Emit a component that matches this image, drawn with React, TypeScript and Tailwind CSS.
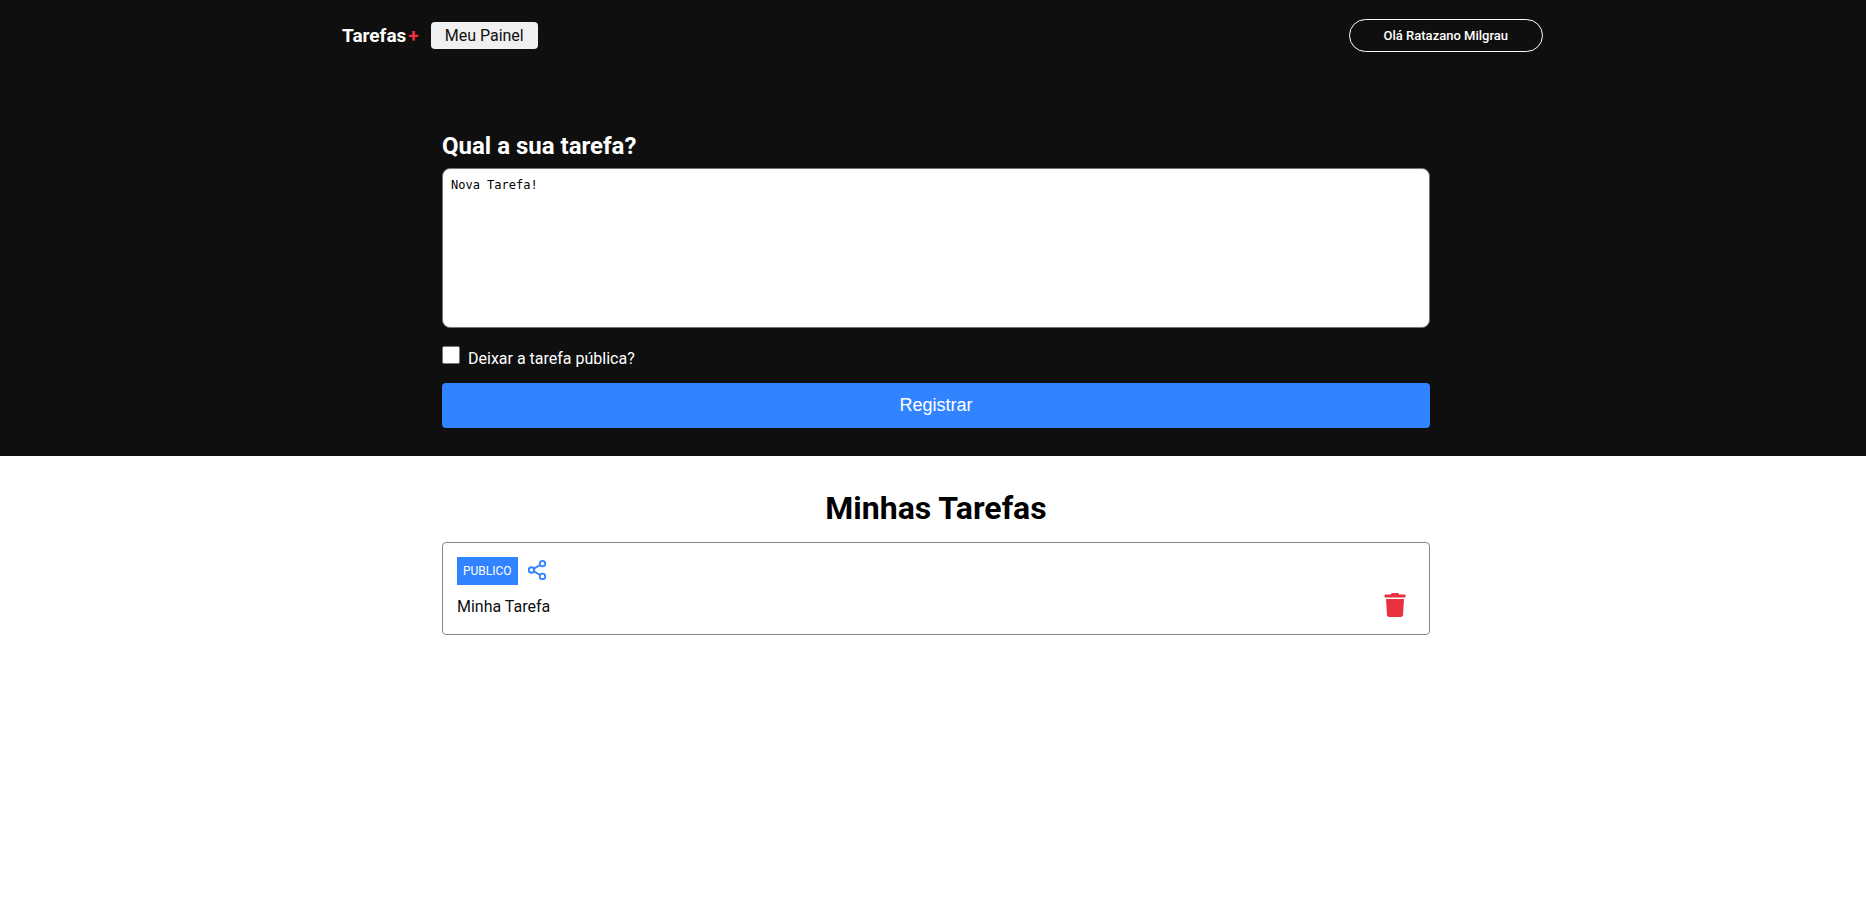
import { useState } from 'react';
import { FiShare2 } from 'react-icons/fi';
import { FaTrash } from 'react-icons/fa';

function Header() {
  return (
    <header className="flex w-full justify-center pt-[19px] pl-[19px]">
      <section className="flex w-full max-w-[1201px] items-center justify-between">
        <nav className="flex items-center gap-3">
          <a href="#inicio" className="flex gap-0.5 text-[19px] leading-7 font-bold text-white">
            Tarefas<span className="text-[#ea3140]">+</span>
          </a>
          <a
            href="#painel"
            className="rounded bg-[#f0f0f0] px-3.5 text-base leading-[27px] text-[#0f0f0f]"
          >
            Meu Painel
          </a>
        </nav>
        <button
          type="button"
          className="h-[33px] cursor-pointer rounded-full border border-white px-[34px] text-[13px] leading-4 font-medium text-white"
        >
          Olá Ratazano Milgrau
        </button>
      </section>
    </header>
  );
}

function TaskForm() {
  const [text, setText] = useState('Nova Tarefa!');
  const [isPublic, setIsPublic] = useState(false);

  return (
    <section className="flex w-full justify-center pt-20 pb-7 pl-1.5">
      <form className="w-full max-w-[988px]" onSubmit={(e) => e.preventDefault()}>
        <h1 className="mb-2 text-2xl leading-7 font-bold text-white">
          <label htmlFor="tarefa">Qual a sua tarefa?</label>
        </h1>
        <textarea
          id="tarefa"
          value={text}
          onChange={(e) => setText(e.target.value)}
          className="block h-40 w-full resize-none rounded-lg border border-[#767676] bg-white p-2 font-['DejaVu_Sans_Mono',monospace] text-xs leading-4 text-black outline-none"
        />
        <div className="mt-[18px] mb-3.5 flex items-start gap-2">
          <input
            id="publica"
            type="checkbox"
            checked={isPublic}
            onChange={(e) => setIsPublic(e.target.checked)}
            className="size-[18px] appearance-none rounded-[2px] border border-[#767676] bg-white checked:bg-[#3183ff]"
          />
          <label htmlFor="publica" className="pt-[3px] text-base leading-5 text-white">
            Deixar a tarefa pública?
          </label>
        </div>
        <button
          type="submit"
          className="h-[45px] w-full cursor-pointer rounded bg-[#3183ff] pb-0.5 font-['Liberation_Sans',Arial,sans-serif] text-lg leading-5 text-white"
        >
          Registrar
        </button>
      </form>
    </section>
  );
}

function TaskCard({ task }: { task: string }) {
  return (
    <article className="w-full rounded border border-[#868686] px-3.5 pt-3.5 pb-[13px] leading-5">
      <div className="mb-2 flex items-center gap-2">
        <span className="bg-[#3183ff] px-1.5 text-xs leading-7 text-white">PUBLICO</span>
        <button type="button" aria-label="Compartilhar" className="cursor-pointer pb-0.5">
          <FiShare2 size={22} color="#3183ff" />
        </button>
      </div>
      <div className="flex items-center justify-between">
        <p className="text-base leading-7 text-[#0f0f0f]">{task}</p>
        <button type="button" aria-label="Excluir" className="mr-2 cursor-pointer pb-1">
          <FaTrash size={24} color="#ea3140" />
        </button>
      </div>
    </article>
  );
}

export default function App() {
  return (
    <div className="min-h-screen bg-white font-[Roboto,sans-serif]">
      <div className="bg-[#0f0f0f]">
        <Header />
        <TaskForm />
      </div>
      <main className="flex justify-center pt-8 pl-1.5">
        <section className="w-full max-w-[988px]">
          <h2 className="mb-3.5 text-center text-[32px] leading-10 font-bold text-black">
            Minhas Tarefas
          </h2>
          <TaskCard task="Minha Tarefa" />
        </section>
      </main>
    </div>
  );
}
